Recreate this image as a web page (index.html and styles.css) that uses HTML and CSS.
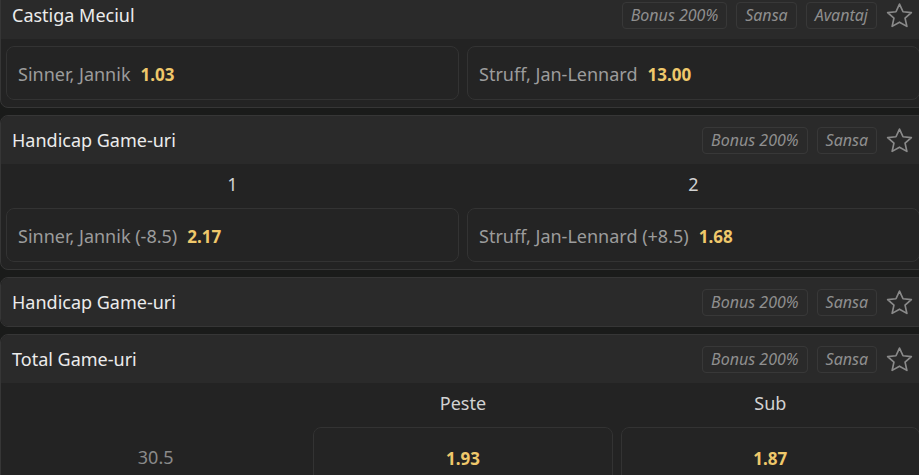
FILE: index.html
```html
<!DOCTYPE html>
<html lang="ro">
  <head>
    <meta charset="UTF-8" />
    <meta name="viewport" content="width=device-width, initial-scale=1.0" />
    <title>Piete</title>
    <link rel="stylesheet" href="styles.css">
  </head>
  <body>
    <div class="markets">
      <!-- castiga meciul -->
      <section class="market first">
        <div class="market-head">
          <span class="market-title">Castiga Meciul</span>
          <div class="tags">
            <span class="tag">Bonus 200%</span>
            <span class="tag">Sansa</span>
            <span class="tag">Avantaj</span>
            <svg class="star" viewBox="0 0 24 24"><path d="M12 2.6l2.9 6.3 6.9.7-5.2 4.6 1.5 6.8L12 17.5 5.9 21l1.5-6.8L2.2 9.6l6.9-.7z"/></svg>
          </div>
        </div>
        <div class="market-body">
          <div class="odds two">
            <div class="pick"><span class="name">Sinner, Jannik</span><b class="price">1.03</b></div>
            <div class="pick"><span class="name">Struff, Jan-Lennard</span><b class="price">13.00</b></div>
          </div>
        </div>
      </section>

      <!-- handicap -->
      <section class="market">
        <div class="market-head">
          <span class="market-title">Handicap Game-uri</span>
          <div class="tags">
            <span class="tag">Bonus 200%</span>
            <span class="tag">Sansa</span>
            <svg class="star" viewBox="0 0 24 24"><path d="M12 2.6l2.9 6.3 6.9.7-5.2 4.6 1.5 6.8L12 17.5 5.9 21l1.5-6.8L2.2 9.6l6.9-.7z"/></svg>
          </div>
        </div>
        <div class="market-body">
          <div class="labels two">
            <span>1</span>
            <span>2</span>
          </div>
          <div class="odds two">
            <div class="pick"><span class="name">Sinner, Jannik (-8.5)</span><b class="price">2.17</b></div>
            <div class="pick"><span class="name">Struff, Jan-Lennard (+8.5)</span><b class="price">1.68</b></div>
          </div>
        </div>
      </section>

      <!-- handicap inchis -->
      <section class="market">
        <div class="market-head">
          <span class="market-title">Handicap Game-uri</span>
          <div class="tags">
            <span class="tag">Bonus 200%</span>
            <span class="tag">Sansa</span>
            <svg class="star" viewBox="0 0 24 24"><path d="M12 2.6l2.9 6.3 6.9.7-5.2 4.6 1.5 6.8L12 17.5 5.9 21l1.5-6.8L2.2 9.6l6.9-.7z"/></svg>
          </div>
        </div>
      </section>

      <!-- total -->
      <section class="market">
        <div class="market-head">
          <span class="market-title">Total Game-uri</span>
          <div class="tags">
            <span class="tag">Bonus 200%</span>
            <span class="tag">Sansa</span>
            <svg class="star" viewBox="0 0 24 24"><path d="M12 2.6l2.9 6.3 6.9.7-5.2 4.6 1.5 6.8L12 17.5 5.9 21l1.5-6.8L2.2 9.6l6.9-.7z"/></svg>
          </div>
        </div>
        <div class="market-body">
          <div class="labels three">
            <span></span>
            <span>Peste</span>
            <span>Sub</span>
          </div>
          <div class="odds three">
            <div class="line">30.5</div>
            <div class="pick center tall"><b class="price">1.93</b></div>
            <div class="pick center tall"><b class="price">1.87</b></div>
          </div>
        </div>
      </section>
    </div>
  </body>
</html>
```

FILE: styles.css
```css
body {
  margin: 0;
  background-color: #1a1b1a;
  font-family: "Noto Sans", "Open Sans", sans-serif;
  overflow: hidden;
}
.markets {
  width: 926px;
  /* lista e derulata putin in jos */
  margin-top: -10px;
}
.market {
  background-color: #232323;
  border: 1px solid #363636;
  border-radius: 8px;
  overflow: hidden;
  margin-bottom: 7px;
}
.market-head {
  height: 48px;
  display: flex;
  align-items: center;
  justify-content: space-between;
  padding: 0 11px 0 11px;
  background-color: #2a2a2a;
}
.market-title {
  color: #ececec;
  font-size: 18px;
}
.tags {
  display: flex;
  align-items: center;
  gap: 9px;
}
.tag {
  height: 25px;
  line-height: 25px;
  padding: 0 8px;
  border: 1px solid #383838;
  border-radius: 4px;
  color: #8f8f8f;
  font-size: 16px;
  font-style: italic;
}
.star {
  width: 29px;
  height: 29px;
  fill: none;
  stroke: #8a8a8a;
  stroke-width: 1.4;
  stroke-linejoin: round;
  margin-left: -1px;
}
.market-body {
  padding: 0 5px 7px 5px;
}
.market-body > .odds:first-child {
  padding-top: 7px;
}
.labels {
  display: grid;
  gap: 8px;
  padding: 8px 0 12px 0;
  color: #d2d2d2;
  font-size: 18px;
  line-height: 24px;
  text-align: center;
}
.two {
  grid-template-columns: 1fr 1fr;
}
.three {
  grid-template-columns: 1fr 1fr 1fr;
}
.odds {
  display: grid;
  gap: 8px;
}
.pick {
  height: 50px;
  padding: 2px 11px 0 11px;
  display: flex;
  align-items: center;
  gap: 10px;
  border: 1px solid #333333;
  border-radius: 8px;
  background-color: #242424;
  font-size: 18px;
}
.pick.center {
  justify-content: center;
}
.pick.tall {
  height: 56px;
}
.name {
  color: #9c9c9c;
}
.price {
  color: #efc86b;
  font-weight: 700;
  font-size: 17px;
}
.line {
  display: flex;
  align-items: center;
  justify-content: center;
  color: #8a8a8a;
  font-size: 18px;
}
```
